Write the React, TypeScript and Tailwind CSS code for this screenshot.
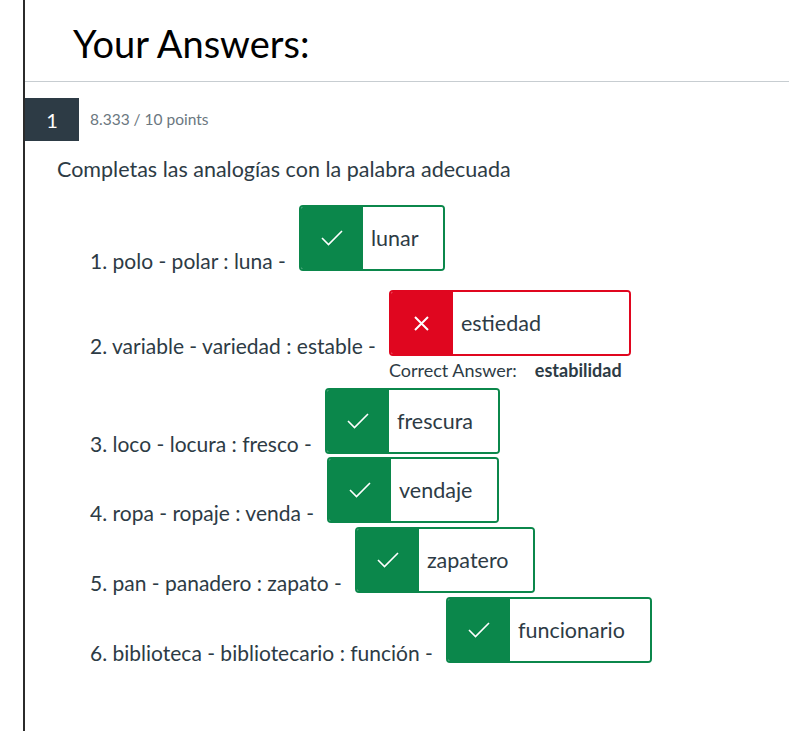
import React from "react";

const font = { fontFamily: "Lato, 'Noto Sans', sans-serif" };

function Check() {
  return (
    <svg width="22" height="16" viewBox="0 0 22 16" fill="none">
      <path d="M1 8 L7.5 14.5 L21 1" stroke="white" strokeWidth="1.6" />
    </svg>
  );
}

function Cross() {
  return (
    <svg width="15" height="15" viewBox="0 0 15 15" fill="none">
      <path d="M1 1 L14 14 M14 1 L1 14" stroke="white" strokeWidth="2" />
    </svg>
  );
}

function Box({ text, ok, wide }: { text: string; ok: boolean; wide?: boolean }) {
  const border = ok ? "border-[#0b874b]" : "border-[#e0061f]";
  const bg = ok ? "bg-[#0b874b]" : "bg-[#e0061f]";
  return (
    <div className={`flex h-[66px] rounded-[4px] border-2 ${border} overflow-hidden ${wide ? "w-[242px]" : ""}`}>
      <div className={`w-[62px] shrink-0 ${bg} flex items-center justify-center`}>
        {ok ? <Check /> : <Cross />}
      </div>
      <div className="flex items-center pl-[8px] pr-[25px] text-[21.5px] leading-[24px] text-[#2d3b45] bg-white grow">
        {text}
      </div>
    </div>
  );
}

function Row({ label, children }: { label: string; children: React.ReactNode }) {
  return (
    <div className="flex items-start">
      <div className="h-[66px] flex items-end">
        <span className="text-[21px] leading-[24px] text-[#2d3b45] mb-[-2px]">{label}</span>
      </div>
      <div className="ml-[13px]">{children}</div>
    </div>
  );
}

export default function App() {
  return (
    <div className="w-[789px] h-[731px] bg-white overflow-hidden" style={font}>
      <div className="ml-[23px] h-full border-l-2 border-[#2b2b2b] flex flex-col">
        <div className="h-[82px] border-b border-[#c7cdd1] pl-[48px] pt-[20px]">
          <h2 className="text-[38px] leading-[46px] text-black">Your Answers:</h2>
        </div>
        <div className="mt-[16px] flex items-center">
          <div className="w-[54px] h-[43px] bg-[#2d3b45] text-white text-[20px] flex items-center justify-center">1</div>
          <span className="ml-[11px] text-[15.5px] text-[#6b7780]">8.333 / 10 points</span>
        </div>
        <p className="ml-[32px] mt-[16px] text-[21.5px] leading-[24px] text-[#2d3b45]">
          Completas las analogías con la palabra adecuada
        </p>
        <div className="ml-[65px] mt-[24px] flex flex-col">
          <Row label="1. polo - polar : luna -">
            <Box text="lunar" ok />
          </Row>
          <div className="mt-[19px]">
            <Row label="2. variable - variedad : estable -">
              <div className="flex flex-col">
                <Box text="estiedad" ok={false} wide />
                <div className="mt-[4px] flex text-[18px] leading-[20px] text-[#2d3b45]">
                  <span>Correct Answer:</span>
                  <b className="ml-[18px] font-bold">estabilidad</b>
                </div>
              </div>
            </Row>
          </div>
          <div className="mt-[8px]">
            <Row label="3. loco - locura : fresco -">
              <Box text="frescura" ok />
            </Row>
          </div>
          <div className="mt-[3px]">
            <Row label="4. ropa - ropaje : venda -">
              <Box text="vendaje" ok />
            </Row>
          </div>
          <div className="mt-[4px]">
            <Row label="5. pan - panadero : zapato -">
              <Box text="zapatero" ok />
            </Row>
          </div>
          <div className="mt-[4px]">
            <Row label="6. biblioteca - bibliotecario : función -">
              <Box text="funcionario" ok />
            </Row>
          </div>
        </div>
      </div>
    </div>
  );
}
